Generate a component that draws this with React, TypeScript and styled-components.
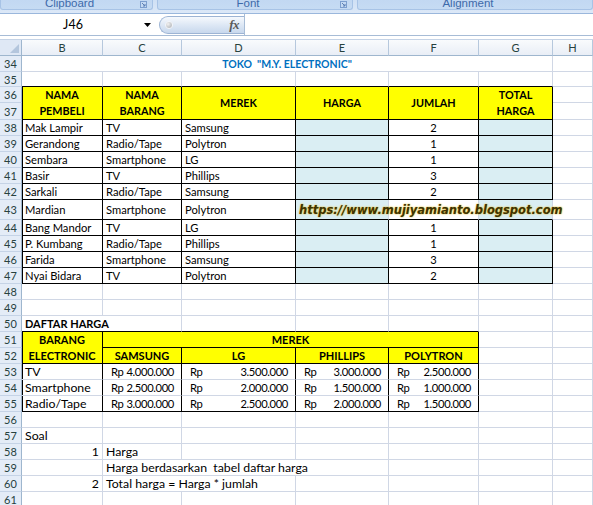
import React from 'react';
import styled, { createGlobalStyle } from 'styled-components';

const GlobalStyle = createGlobalStyle`
  html, body { margin: 0; padding: 0; background: #ffffff; }
  body { width: 593px; height: 505px; overflow: hidden; font-family: Lato, "Liberation Sans", sans-serif; }
  #root { width: 593px; height: 505px; }
`;

const Window = styled.div`
  width: 593px;
  height: 505px;
  overflow: hidden;
  display: flex;
  flex-direction: column;
  background: #ffffff;
`;

/* ---------- Ribbon ---------- */
const Ribbon = styled.div`
  height: 14px;
  flex: none;
  display: flex;
  gap: 4px;
  box-sizing: border-box;
  padding-bottom: 3px;
  background: linear-gradient(#cfe0f5, #dce8f7);
  border-bottom: 1px solid #9ab7dc;
`;

const Group = styled.div<{ $w?: number }>`
  ${(p) => (p.$w ? `width: ${p.$w}px; flex: none;` : 'flex: 1;')}
  height: 10px;
  box-sizing: border-box;
  background: linear-gradient(#c2d8f2, #c6dbf3);
  border: 1px solid #a7c3e6;
  border-top: none;
  border-radius: 0 0 3px 3px;
  display: flex;
  align-items: flex-end;
  justify-content: center;
  padding-right: 14px;
  position: relative;
  overflow: hidden;
`;

const GroupLabel = styled.span`
  font: 11.5px "Liberation Sans", sans-serif;
  line-height: 11px;
  color: #3e6aaa;
  margin-bottom: 0px;
`;

const Launcher = styled.svg`
  position: absolute;
  right: 5px;
  bottom: 1px;
`;

/* ---------- Formula bar ---------- */
const FormulaBar = styled.div`
  height: 22px;
  flex: none;
  display: flex;
  align-items: stretch;
  background: #ffffff;
  box-sizing: border-box;
  border-bottom: 1px solid #a7bcd6;
`;

const NameBox = styled.div`
  width: 155px;
  flex: none;
  display: flex;
  align-items: center;
  box-sizing: border-box;
`;

const NameText = styled.span`
  flex: 1;
  text-align: center;
  font: 12.5px Lato, sans-serif;
  color: #000;
  padding-left: 2px;
`;

const DropArrow = styled.svg`
  margin-right: 4px;
`;

const FxArea = styled.div`
  width: 85px;
  flex: none;
  margin-left: 4px;
  margin-top: 2px;
  margin-bottom: 1px;
  box-sizing: border-box;
  border: 1px solid #9db4d4;
  border-right: none;
  border-radius: 10px 0 0 10px;
  background: linear-gradient(#f6f9fd, #dbe6f4 55%, #c8d8ed);
  display: flex;
  align-items: center;
  justify-content: space-between;
  padding: 0 5px 0 5px;
`;

const Knob = styled.span`
  width: 8px;
  height: 8px;
  border-radius: 50%;
  box-sizing: border-box;
  border: 1px solid #f4f6f9;
  background: radial-gradient(circle at 35% 35%, #f2f2f2, #a4a8ad);
`;

const FxText = styled.span`
  font: italic bold 13px "Liberation Serif", serif;
  color: #5a5a5a;
  letter-spacing: -0.5px;
`;

const FormulaInput = styled.div`
  flex: 1;
  border-left: 1px solid #a7bcd6;
  background: #fff;
`;

const Band = styled.div`
  height: 4px;
  flex: none;
  background: #ffffff;
  border-bottom: 1px solid #c5d3e6;
  box-sizing: border-box;
`;

/* ---------- Sheet ---------- */
const COL_W = [22, 81, 79, 114, 93, 90, 74, 40];
const COLS = ['B', 'C', 'D', 'E', 'F', 'G', 'H'];
const ROWS = Array.from({ length: 28 }, (_, i) => 34 + i);
const ROW_H: Record<number, number> = { 35: 15, 37: 17, 43: 20 };

const Sheet = styled.div`
  flex: none;
  display: grid;
  grid-template-columns: ${COL_W.map((w) => `${w}px`).join(' ')};
  grid-template-rows: 16px ${ROWS.map((r) => `${ROW_H[r] ?? 16}px`).join(' ')};
`;

const Corner = styled.div`
  grid-row: 1;
  grid-column: 1;
  box-sizing: border-box;
  background: #dfe8f5;
  border-right: 1px solid #9eb6ce;
  border-bottom: 1px solid #9eb6ce;
  display: flex;
  align-items: flex-end;
  justify-content: flex-end;
  padding: 0 2px 2px 0;
`;

const ColHead = styled.div<{ $c: number }>`
  grid-row: 1;
  grid-column: ${(p) => p.$c};
  box-sizing: border-box;
  background: linear-gradient(#f9fbfd, #e9eef6);
  border-right: 1px solid #b6c8dd;
  border-bottom: 1px solid #9eb6ce;
  display: flex;
  align-items: center;
  justify-content: center;
  font: 11px Lato, sans-serif;
  color: #27413e;
`;

const RowHead = styled.div<{ $r: number }>`
  grid-row: ${(p) => p.$r};
  grid-column: 1;
  box-sizing: border-box;
  background: #e4ecf7;
  border-right: 1px solid #9eb6ce;
  border-bottom: 1px solid #c5d3e6;
  display: flex;
  align-items: center;
  justify-content: center;
  font: 11px Lato, sans-serif;
  color: #27413e;
`;

type Align = 'left' | 'center' | 'right';

const Cell = styled.div<{
  $r: number;
  $c: number;
  $rs: number;
  $cs: number;
  $fill?: string;
  $rb: string;
  $bb: string;
  $lb?: boolean;
  $align: Align;
  $bold?: boolean;
  $big?: boolean;
}>`
  grid-row: ${(p) => p.$r} / span ${(p) => p.$rs};
  grid-column: ${(p) => p.$c} / span ${(p) => p.$cs};
  box-sizing: border-box;
  min-width: 0;
  border-right: 1px solid ${(p) => p.$rb};
  border-bottom: 1px solid ${(p) => p.$bb};
  ${(p) => (p.$lb ? 'box-shadow: inset 1px 0 0 #000;' : '')}
  background: ${(p) => p.$fill ?? 'transparent'};
  display: flex;
  flex-direction: column;
  justify-content: center;
  align-items: ${(p) => (p.$align === 'left' ? 'flex-start' : p.$align === 'right' ? 'flex-end' : 'center')};
  padding: 0 3px;
  font-family: Lato, sans-serif;
  font-size: ${(p) => (p.$big ? (p.$bold ? '11px' : '12.3px') : p.$bold ? '10.8px' : '11.2px')};
  font-weight: ${(p) => (p.$bold ? 700 : 400)};
  color: #000;
  white-space: nowrap;
`;

const Line = styled.span`
  line-height: 16px;
  white-space: pre;
`;

const Title = styled.span`
  font: bold 10.5px Lato, sans-serif;
  color: #0070c0;
  white-space: pre;
`;

const Acct = styled.span`
  align-self: stretch;
  display: flex;
  justify-content: space-between;
  padding: 0 4px 0 5px;
  font-size: 11.2px;
  letter-spacing: -0.35px;
`;

const Watermark = styled.span`
  position: relative;
  z-index: 2;
  font: italic bold 11.5px "DejaVu Sans", sans-serif;
  color: #3d3205;
  text-shadow: 0 0 2px #e2c23a, 0 0 1px #e2c23a;
  white-space: nowrap;
`;

/* ---------- Data ---------- */
type Borders = { t?: boolean; r?: boolean; b?: boolean; l?: boolean };
type CellDef = {
  text?: string;
  lines?: string[];
  acct?: string;
  cs?: number;
  rs?: number;
  align?: Align;
  bold?: boolean;
  fill?: string;
  big?: boolean;
  title?: boolean;
  url?: string;
  bd?: Borders;
};

const BOX: Borders = { t: true, r: true, b: true, l: true };
const YEL = '#ffff00';
const BLUE = '#daeef3';
const GRID = '#d0d7e5';

const cells: Record<string, CellDef> = {};
const put = (r: number, c: number, cell: CellDef) => {
  cells[`${r}:${c}`] = cell;
};

put(34, 1, { title: true, text: 'TOKO  "M.Y. ELECTRONIC"', cs: 6, align: 'center' });

[['NAMA', 'PEMBELI'], ['NAMA', 'BARANG'], ['MEREK'], ['HARGA'], ['JUMLAH'], ['TOTAL', 'HARGA']].forEach((lines, i) =>
  put(36, i + 1, { lines, rs: 2, align: 'center', bold: true, fill: YEL, bd: BOX })
);

const buyers = [
  ['Mak Lampir', 'TV', 'Samsung', '2'],
  ['Gerandong', 'Radio/Tape', 'Polytron', '1'],
  ['Sembara', 'Smartphone', 'LG', '1'],
  ['Basir', 'TV', 'Phillips', '3'],
  ['Sarkali', 'Radio/Tape', 'Samsung', '2'],
  ['Mardian', 'Smartphone', 'Polytron', ''],
  ['Bang Mandor', 'TV', 'LG', '1'],
  ['P. Kumbang', 'Radio/Tape', 'Phillips', '1'],
  ['Farida', 'Smartphone', 'Samsung', '3'],
  ['Nyai Bidara', 'TV', 'Polytron', '2'],
];

buyers.forEach(([n, b, m, j], i) => {
  const r = 38 + i;
  const wm = r === 43;
  const open: Borders = { t: true, b: true };
  put(r, 1, { text: n, bd: BOX });
  put(r, 2, { text: b, bd: BOX });
  put(r, 3, { text: m, bd: BOX });
  put(r, 4, { fill: BLUE, bd: wm ? open : BOX, url: wm ? 'https://www.mujiyamianto.blogspot.com' : undefined });
  put(r, 5, { text: j, align: 'center', bd: wm ? open : BOX });
  put(r, 6, { fill: BLUE, bd: wm ? open : BOX });
});

put(50, 1, { text: 'DAFTAR HARGA', cs: 2, bold: true, big: true });
put(51, 1, { lines: ['BARANG', 'ELECTRONIC'], rs: 2, align: 'center', bold: true, big: true, fill: YEL, bd: BOX });
put(51, 2, { text: 'MEREK', cs: 4, align: 'center', bold: true, big: true, fill: YEL, bd: BOX });
['SAMSUNG', 'LG', 'PHILLIPS', 'POLYTRON'].forEach((t, i) =>
  put(52, 2 + i, { text: t, align: 'center', bold: true, big: true, fill: YEL, bd: BOX })
);

const prices = [
  ['TV', '4.000.000', '3.500.000', '3.000.000', '2.500.000'],
  ['Smartphone', '2.500.000', '2.000.000', '1.500.000', '1.000.000'],
  ['Radio/Tape', '3.000.000', '2.500.000', '2.000.000', '1.500.000'],
];
prices.forEach((row, i) => {
  const r = 53 + i;
  const bd: Borders = { l: true, r: true, t: i === 0, b: i === 2 };
  put(r, 1, { text: row[0], big: true, bd });
  row.slice(1).forEach((v, j) => put(r, 2 + j, { acct: v, big: true, bd }));
});

put(57, 1, { text: 'Soal', big: true });
put(58, 1, { text: '1', align: 'right', big: true });
put(58, 2, { text: 'Harga', big: true });
put(59, 2, { text: 'Harga berdasarkan  tabel daftar harga', cs: 3, big: true });
put(60, 1, { text: '2', align: 'right', big: true });
put(60, 2, { text: 'Total harga = Harga * jumlah', cs: 2, big: true });

const anchors = Object.entries(cells).map(([k, cell]) => {
  const [r, c] = k.split(':').map(Number);
  return { r, c, cell };
});

const anchorAt = (r: number, c: number): CellDef | undefined => {
  const hit = anchors.find(
    (a) => r >= a.r && r < a.r + (a.cell.rs ?? 1) && c >= a.c && c < a.c + (a.cell.cs ?? 1)
  );
  return hit ? hit.cell : undefined;
};

const covered = new Set<string>();
anchors.forEach(({ r, c, cell }) => {
  for (let dr = 0; dr < (cell.rs ?? 1); dr++)
    for (let dc = 0; dc < (cell.cs ?? 1); dc++) if (dr || dc) covered.add(`${r + dr}:${c + dc}`);
});

const LauncherIcon = () => (
  <Launcher width="7" height="7" viewBox="0 0 7 7">
    <rect x="0.5" y="0.5" width="6" height="6" fill="none" stroke="#7d9fcf" />
    <path d="M2 2 L5 5 M5 3 V5 H3" stroke="#5c7fb4" fill="none" />
  </Launcher>
);

export default function App() {
  const sheetCells: React.ReactNode[] = [];
  ROWS.forEach((rowNum, ri) => {
    const gridRow = ri + 2;
    sheetCells.push(
      <RowHead key={`rh${rowNum}`} $r={gridRow}>
        {rowNum}
      </RowHead>
    );
    for (let c = 1; c <= 7; c++) {
      const key = `${rowNum}:${c}`;
      if (covered.has(key)) continue;
      const cell = cells[key] ?? {};
      const rs = cell.rs ?? 1;
      const cs = cell.cs ?? 1;
      const right = cell.bd?.r || anchorAt(rowNum, c + cs)?.bd?.l;
      const bottom = cell.bd?.b || anchorAt(rowNum + rs, c)?.bd?.t;
      let content: React.ReactNode = null;
      if (cell.title) content = <Title>{cell.text}</Title>;
      else if (cell.lines) content = cell.lines.map((l) => <Line key={l}>{l}</Line>);
      else if (cell.acct)
        content = (
          <Acct>
            <span>Rp</span>
            <span>{cell.acct}</span>
          </Acct>
        );
      else if (cell.url) content = <Watermark>{cell.url}</Watermark>;
      else if (cell.text) content = <Line>{cell.text}</Line>;
      sheetCells.push(
        <Cell
          key={key}
          $r={gridRow}
          $c={c + 1}
          $rs={rs}
          $cs={cs}
          $fill={cell.fill}
          $rb={right ? '#000' : GRID}
          $bb={bottom ? '#000' : GRID}
          $lb={c === 1 && !!cell.bd?.l}
          $align={cell.align ?? 'left'}
          $bold={cell.bold}
          $big={cell.big}
        >
          {content}
        </Cell>
      );
    }
  });

  return (
    <Window>
      <GlobalStyle />
      <Ribbon>
        <Group $w={153}>
          <GroupLabel>Clipboard</GroupLabel>
          <LauncherIcon />
        </Group>
        <Group $w={196}>
          <GroupLabel>Font</GroupLabel>
          <LauncherIcon />
        </Group>
        <Group>
          <GroupLabel>Alignment</GroupLabel>
        </Group>
      </Ribbon>
      <FormulaBar>
        <NameBox>
          <NameText>J46</NameText>
          <DropArrow width="7" height="4" viewBox="0 0 7 4">
            <path d="M0 0 H7 L3.5 4 Z" fill="#000" />
          </DropArrow>
        </NameBox>
        <FxArea>
          <Knob />
          <FxText>fx</FxText>
        </FxArea>
        <FormulaInput />
      </FormulaBar>
      <Band />
      <Sheet>
        <Corner>
          <svg width="9" height="9" viewBox="0 0 9 9">
            <path d="M9 0 V9 H0 Z" fill="#b4c6dd" />
          </svg>
        </Corner>
        {COLS.map((l, i) => (
          <ColHead key={l} $c={i + 2}>
            {l}
          </ColHead>
        ))}
        {sheetCells}
      </Sheet>
    </Window>
  );
}
